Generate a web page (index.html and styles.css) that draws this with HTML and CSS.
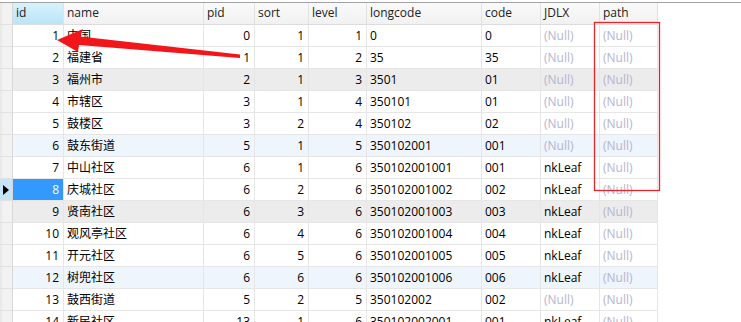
FILE: index.html
```html
<!DOCTYPE html>
<html lang="zh">
<head>
<meta charset="utf-8">
<link rel="stylesheet" href="styles.css">
</head>
<body>
<div class="topline"></div>
<div class="grid-wrap">
  <div class="row head">
    <div class="ind"></div>
    <div class="c sel-h">id</div>
    <div class="c">name</div>
    <div class="c">pid</div>
    <div class="c">sort</div>
    <div class="c">level</div>
    <div class="c">longcode</div>
    <div class="c">code</div>
    <div class="c">JDLX</div>
    <div class="c">path</div>
  </div>
  <div class="row"><div class="ind"></div><div class="c r">1</div><div class="c">中国</div><div class="c r">0</div><div class="c r">1</div><div class="c r">1</div><div class="c">0</div><div class="c">0</div><div class="c n">(Null)</div><div class="c n">(Null)</div></div>
  <div class="row"><div class="ind"></div><div class="c r">2</div><div class="c">福建省</div><div class="c r">1</div><div class="c r">1</div><div class="c r">2</div><div class="c">35</div><div class="c">35</div><div class="c n">(Null)</div><div class="c n">(Null)</div></div>
  <div class="row gray"><div class="ind"></div><div class="c r">3</div><div class="c">福州市</div><div class="c r">2</div><div class="c r">1</div><div class="c r">3</div><div class="c">3501</div><div class="c">01</div><div class="c n">(Null)</div><div class="c n">(Null)</div></div>
  <div class="row"><div class="ind"></div><div class="c r">4</div><div class="c">市辖区</div><div class="c r">3</div><div class="c r">1</div><div class="c r">4</div><div class="c">350101</div><div class="c">01</div><div class="c n">(Null)</div><div class="c n">(Null)</div></div>
  <div class="row"><div class="ind"></div><div class="c r">5</div><div class="c">鼓楼区</div><div class="c r">3</div><div class="c r">2</div><div class="c r">4</div><div class="c">350102</div><div class="c">02</div><div class="c n">(Null)</div><div class="c n">(Null)</div></div>
  <div class="row blue"><div class="ind"></div><div class="c r">6</div><div class="c">鼓东街道</div><div class="c r">5</div><div class="c r">1</div><div class="c r">5</div><div class="c">350102001</div><div class="c">001</div><div class="c n">(Null)</div><div class="c n">(Null)</div></div>
  <div class="row"><div class="ind"></div><div class="c r">7</div><div class="c">中山社区</div><div class="c r">6</div><div class="c r">1</div><div class="c r">6</div><div class="c">350102001001</div><div class="c">001</div><div class="c">nkLeaf</div><div class="c n">(Null)</div></div>
  <div class="row"><div class="ind cur"><span class="tri"></span></div><div class="c r selcell">8</div><div class="c">庆城社区</div><div class="c r">6</div><div class="c r">2</div><div class="c r">6</div><div class="c">350102001002</div><div class="c">002</div><div class="c">nkLeaf</div><div class="c n">(Null)</div></div>
  <div class="row gray"><div class="ind"></div><div class="c r">9</div><div class="c">贤南社区</div><div class="c r">6</div><div class="c r">3</div><div class="c r">6</div><div class="c">350102001003</div><div class="c">003</div><div class="c">nkLeaf</div><div class="c n">(Null)</div></div>
  <div class="row"><div class="ind"></div><div class="c r">10</div><div class="c">观风亭社区</div><div class="c r">6</div><div class="c r">4</div><div class="c r">6</div><div class="c">350102001004</div><div class="c">004</div><div class="c">nkLeaf</div><div class="c n">(Null)</div></div>
  <div class="row"><div class="ind"></div><div class="c r">11</div><div class="c">开元社区</div><div class="c r">6</div><div class="c r">5</div><div class="c r">6</div><div class="c">350102001005</div><div class="c">005</div><div class="c">nkLeaf</div><div class="c n">(Null)</div></div>
  <div class="row blue"><div class="ind"></div><div class="c r">12</div><div class="c">树兜社区</div><div class="c r">6</div><div class="c r">6</div><div class="c r">6</div><div class="c">350102001006</div><div class="c">006</div><div class="c">nkLeaf</div><div class="c n">(Null)</div></div>
  <div class="row"><div class="ind"></div><div class="c r">13</div><div class="c">鼓西街道</div><div class="c r">5</div><div class="c r">2</div><div class="c r">5</div><div class="c">350102002</div><div class="c">002</div><div class="c n">(Null)</div><div class="c n">(Null)</div></div>
  <div class="row"><div class="ind"></div><div class="c r">14</div><div class="c">新民社区</div><div class="c r">13</div><div class="c r">1</div><div class="c r">6</div><div class="c">350102002001</div><div class="c">001</div><div class="c">nkLeaf</div><div class="c n">(Null)</div></div>

  <svg class="overlay" width="741" height="322" viewBox="0 0 741 322">
    <rect x="594.5" y="22.5" width="65" height="168" fill="none" stroke="#e3262b" stroke-width="1.3"/>
    <polygon points="57,40 83,29 80,36.5 240,54.5 240,58 79,45 78,52" fill="#f2161b"/>
  </svg>
</div>
</body>
</html>
```

FILE: styles.css
```css
html, body {
  margin: 0;
  padding: 0;
  background: #ffffff;
  width: 741px;
  height: 322px;
  overflow: hidden;
}
body {
  font-family: "Open Sans", "Noto Sans CJK SC", sans-serif;
  font-size: 12px;
  color: #000;
}
.topline {
  height: 2px;
  background: #ffffff;
  border-bottom: 1px solid #a3a3a3;
}
.grid-wrap {
  position: relative;
}
.row {
  display: grid;
  grid-template-columns: 13px 51px 140px 51px 54px 58px 115px 59px 59px 58px;
  height: 22px;
}
.row > div {
  box-sizing: border-box;
  border-right: 1px solid #e6e6e6;
  border-bottom: 1px solid #e6e6e6;
  height: 22px;
  line-height: 21px;
  white-space: nowrap;
  overflow: hidden;
}
.c {
  padding: 0 3px 0 3px;
}
.c.r {
  text-align: right;
  padding-right: 4px;
}
.ind {
  background: linear-gradient(to right, #e6e6e6 0, #f2f2f2 3px, #f2f2f2 100%);
  position: relative;
}
.row > .ind {
  border-right: 1px solid #d8d8d8;
  border-bottom: 1px solid #e2e2e2;
}
.head > div {
  background: linear-gradient(#fafafa, #f1f1f1);
  color: #222;
  border-bottom: 1px solid #dcdcdc;
  border-right: 1px solid #e2e2e2;
  line-height: 20px;
}
.head > .sel-h {
  background: linear-gradient(#d8f2fd, #b9e4f7);
}
.head > .ind {
  background: linear-gradient(to right, #e6e6e6 0, #f2f2f2 3px, #f2f2f2 100%);
}
.row.gray > .c {
  background: #ececec;
}
.row.blue > .c {
  background: #eef5fd;
}
.n {
  color: #b5b4cf;
}
.row > .selcell {
  background: #3399ff;
  color: #ffffff;
}
.row > .ind.cur {
  background: #c6e6f7;
}
.tri {
  position: absolute;
  left: 3px;
  top: 6px;
  width: 0;
  height: 0;
  border-top: 5px solid transparent;
  border-bottom: 5px solid transparent;
  border-left: 6px solid #000;
}
.overlay {
  position: absolute;
  left: 0;
  top: -3px;
  pointer-events: none;
}
```
